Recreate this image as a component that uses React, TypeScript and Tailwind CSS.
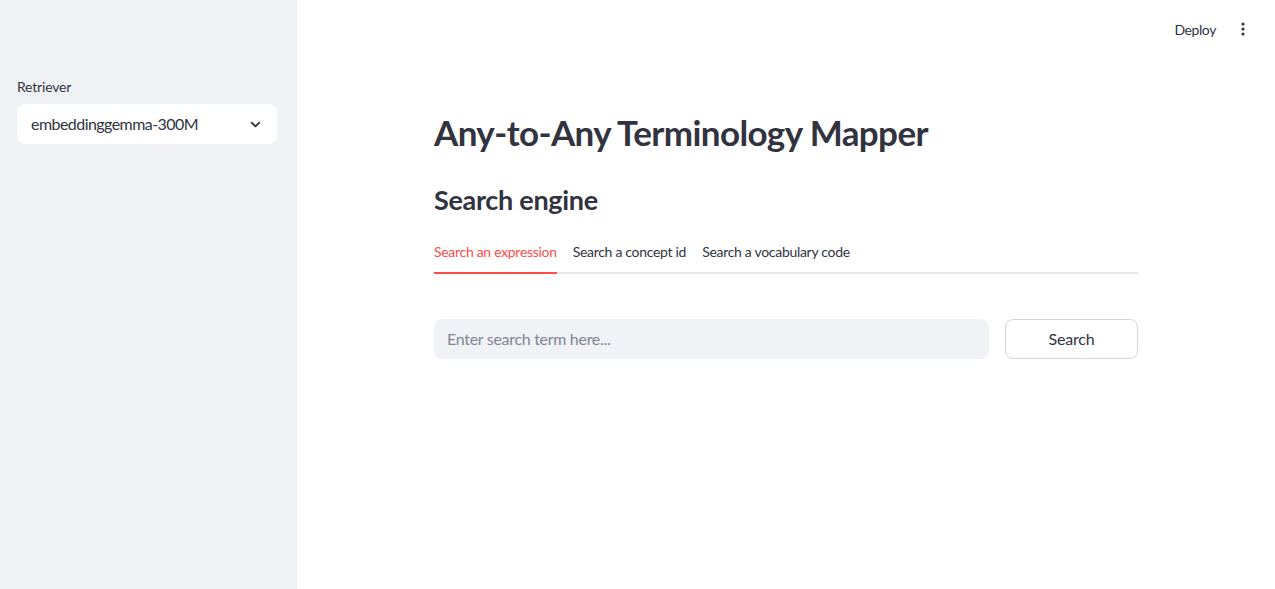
import React from "react";

export default function App() {
  return (
    <div className="flex h-[589px] w-[1275px] overflow-hidden bg-white text-[#31333f]" style={{ fontFamily: "Lato, 'Noto Sans', sans-serif" }}>
      <aside className="flex w-[297px] shrink-0 flex-col bg-[#f0f2f6] px-[17px] pt-[77px]">
        <div className="text-[14px] leading-[20px] tracking-[-0.2px]">Retriever</div>
        <div className="mt-[7px] flex h-[40px] w-[260px] items-center justify-between rounded-[8px] bg-white pl-[14px] pr-[14px]">
          <span className="text-[16px] tracking-[-0.55px]">embeddinggemma-300M</span>
          <svg width="15" height="15" viewBox="0 0 24 24" fill="none" stroke="#31333f" strokeWidth="3" strokeLinecap="round" strokeLinejoin="round"><path d="M6 9l6 6 6-6" /></svg>
        </div>
      </aside>
      <main className="flex flex-1 flex-col">
        <header className="flex h-[58px] items-center justify-end gap-[19px] pr-[24px]">
          <span className="text-[14px] tracking-[-0.4px]">Deploy</span>
          <svg width="16" height="16" viewBox="0 0 16 16" fill="#31333f"><circle cx="8" cy="3" r="1.6" /><circle cx="8" cy="8" r="1.6" /><circle cx="8" cy="13" r="1.6" /></svg>
        </header>
        <div className="ml-[137px] w-[704px]">
          <h1 className="mt-[52px] text-[35px] font-bold leading-[44px] tracking-[-0.6px]">Any-to-Any Terminology Mapper</h1>
          <h2 className="mt-[29px] text-[27px] font-bold leading-[34px] tracking-[-0.3px]">Search engine</h2>
          <div className="mt-[24px] flex gap-[16px] border-b-2 border-[#e6e7ea] text-[14px] tracking-[-0.3px]">
            <div className="-mb-[2px] border-b-2 border-[#ff4b4b] pb-[10px] text-[#ff4b4b]">Search an expression</div>
            <div className="pb-[10px]">Search a concept id</div>
            <div className="pb-[10px]">Search a vocabulary code</div>
          </div>
          <div className="mt-[45px] flex gap-[16px]">
            <div className="flex h-[40px] flex-1 items-center rounded-[8px] bg-[#f0f2f6] px-[13px] text-[16px] tracking-[-0.3px] text-[#808495]">Enter search term here...</div>
            <button className="flex h-[40px] w-[133px] items-center justify-center rounded-[8px] border border-[#d6d6d9] bg-white text-[16px] tracking-[-0.2px]">Search</button>
          </div>
        </div>
      </main>
    </div>
  );
}
